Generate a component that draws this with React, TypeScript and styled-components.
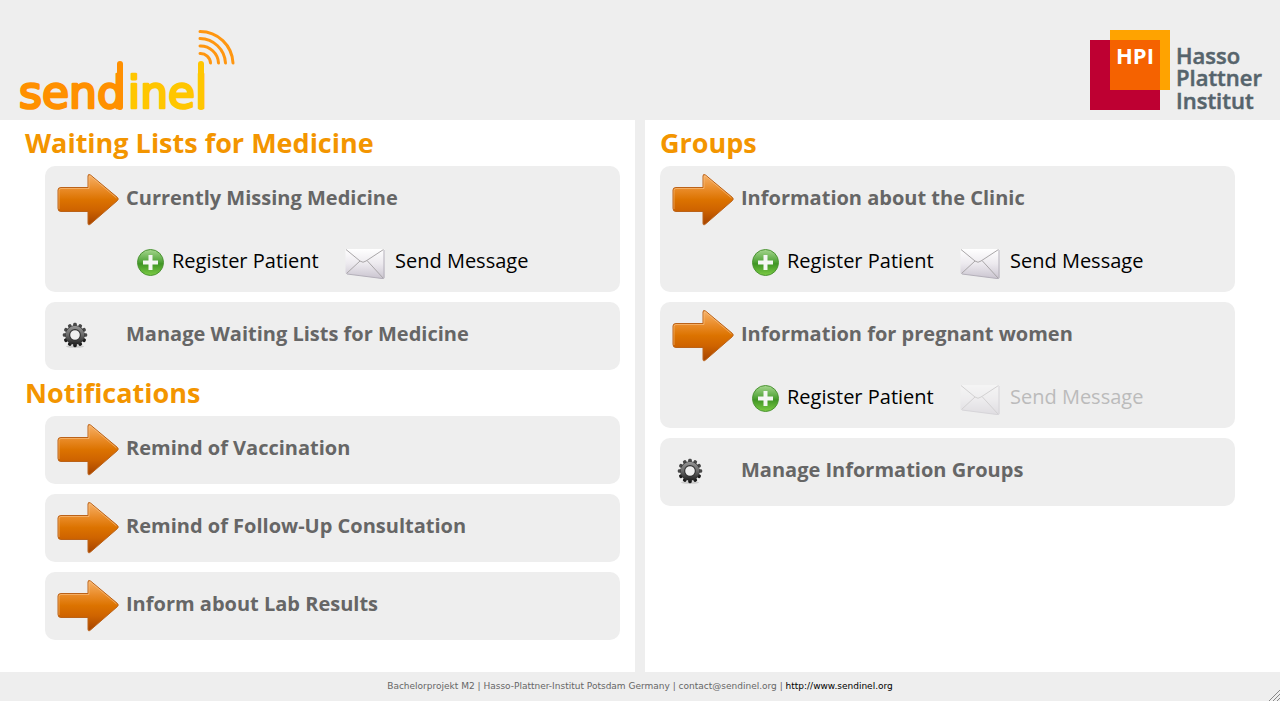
import React, { useId } from "react";
import styled, { createGlobalStyle } from "styled-components";

const GlobalStyle = createGlobalStyle`
  *, *::before, *::after { box-sizing: border-box; }
  body {
    margin: 0;
    background: #fff;
    color: #666;
    font-family: "Open Sans", "Noto Sans", sans-serif;
  }
  a { color: inherit; text-decoration: none; }
`;

const Page = styled.div`
  display: flex;
  flex-direction: column;
  min-height: 100vh;
`;

const Header = styled.header`
  display: flex;
  justify-content: space-between;
  align-items: flex-end;
  height: 120px;
  padding: 0 16px;
  background: #eee;
`;

const LogoLink = styled.a`
  display: block;
  svg { display: block; }
`;

const Main = styled.main`
  flex: 1;
  display: grid;
  grid-template-columns: 1fr 1fr;
  gap: 10px;
  background: #eee;
`;

const Column = styled.div<{ $side: "left" | "right" }>`
  background: #fff;
  padding: ${(p) => (p.$side === "left" ? "0 15px 22px 45px" : "0 45px 22px 15px")};
`;

const SectionTitle = styled.h2<{ $outdent?: boolean }>`
  margin: 0 0 0 ${(p) => (p.$outdent ? "-20px" : "0")};
  font-size: 27px;
  line-height: 46px;
  font-weight: 700;
  color: #f39500;
`;

const CardList = styled.ul`
  list-style: none;
  margin: 0;
  padding: 0;
  display: flex;
  flex-direction: column;
  gap: 10px;
`;

const Card = styled.li`
  background: #eee;
  border-radius: 10px;
`;

const CardLink = styled.a`
  display: grid;
  grid-template-columns: 62px 1fr;
  align-items: center;
  column-gap: 7px;
  height: 68px;
  padding: 0 12px 4px;
  font-size: 20px;
  line-height: 28px;
  font-weight: 700;
`;

const IconSlot = styled.span<{ $kind: "arrow" | "gear" }>`
  padding: ${(p) => (p.$kind === "arrow" ? "3px 0 0" : "2px 0 0 5px")};
  svg { display: block; }
`;

const Actions = styled.div`
  display: grid;
  grid-template-columns: 208px auto;
  justify-content: start;
  height: 58px;
  padding: 11px 12px 0 92px;
`;

const Action = styled.a<{ $wide?: boolean; $disabled?: boolean }>`
  display: grid;
  grid-template-columns: ${(p) => (p.$wide ? "40px" : "27px")} auto;
  column-gap: ${(p) => (p.$wide ? "10px" : "8px")};
  justify-content: start;
  align-items: start;
  font-size: 20px;
  line-height: 32px;
  color: ${(p) => (p.$disabled ? "#bbb" : "#000")};
  pointer-events: ${(p) => (p.$disabled ? "none" : "auto")};
  svg {
    display: block;
    margin-top: 4px;
    opacity: ${(p) => (p.$disabled ? 0.4 : 1)};
  }
`;

const Footer = styled.footer`
  position: relative;
  height: 29px;
  background: #eee;
  text-align: center;
  font-family: "DejaVu Sans", sans-serif;
  font-size: 9px;
  line-height: 28px;
`;

const FooterLink = styled.a`
  color: #000;
`;

const Grip = styled.svg`
  position: absolute;
  right: 0;
  bottom: 0;
`;

function SendinelLogo() {
  return (
    <svg width="222" height="92" viewBox="0 0 222 92" role="img" aria-label="sendinel">
      <g fontFamily="'DejaVu Sans', sans-serif" fontSize="44" strokeWidth="2.600" strokeLinejoin="round">
        <text x="3" y="80" fill="#ff9000" stroke="#ff9000">send</text>
        <text x="112" y="80" fill="#ffc600" stroke="#ffc600">inel</text>
      </g>
      <path d="M104 36V79" stroke="#ff9000" strokeWidth="6" strokeLinecap="round" />
      <path d="M185 36V79" stroke="#ffc600" strokeWidth="6" strokeLinecap="round" />
      <g fill="none" stroke="#ff9610" strokeWidth="3" strokeLinecap="round">
        <path d="M184 25.500a10 10 0 0 1 10.500 9.500" />
        <path d="M184 18a18 18 0 0 1 18.500 17" />
        <path d="M184 10.500a26 26 0 0 1 25.500 24.500" />
        <path d="M184 3.500a33 33 0 0 1 33 31.500" />
      </g>
    </svg>
  );
}

function HpiLogo() {
  return (
    <svg width="174" height="92" viewBox="0 0 174 92" role="img" aria-label="Hasso Plattner Institut">
      <path fill="#be0032" d="M0 12h70v70H0z" />
      <path fill="#ffa300" d="M20 2h60v60H20z" />
      <path fill="#f56200" d="M20 12h50v50H20z" />
      <g fontFamily="'Open Sans', sans-serif" fontSize="22" fontWeight="600">
        <text x="26" y="36" fill="#fff" fontWeight="700">HPI</text>
        <g fill="#56646c" stroke="#56646c" strokeWidth="0.500">
          <text x="86" y="36">Hasso</text>
          <text x="86" y="58">Plattner</text>
          <text x="86" y="81">Institut</text>
        </g>
      </g>
    </svg>
  );
}

function ArrowIcon() {
  const id = useId();
  return (
    <svg width="62" height="54" viewBox="0 0 62 54" aria-hidden="true">
      <defs>
        <linearGradient id={id} x1="0" y1="0" x2="0" y2="1">
          <stop offset="0" stopColor="#f7b26a" />
          <stop offset="0.300" stopColor="#e98a26" />
          <stop offset="0.500" stopColor="#dc7300" />
          <stop offset="0.700" stopColor="#cf6400" />
          <stop offset="1" stopColor="#a54300" />
        </linearGradient>
      </defs>
      <path
        d="M4 14.500H31V3Q31 .500 33.500 2L60.500 24.500Q62 26 60.500 27.500L33.500 51Q31 53 31 50V38.500H4Q1 38.500 1 35.500V17Q1 14.500 4 14.500Z"
        fill={`url(#${id})`}
        stroke="#bb6218"
      />
      <path
        d="M2 36V17.500Q2 15.500 4 15.500H32V4Q32 2 34 3.500L59.500 25"
        fill="none"
        stroke="#fbc890"
        strokeOpacity="0.550"
      />
    </svg>
  );
}

const teeth = Array.from({ length: 12 }, (_, i) => i * 30);

function GearIcon() {
  const id = useId();
  return (
    <svg width="26" height="26" viewBox="0 0 26 26" aria-hidden="true">
      <defs>
        <linearGradient id={id} gradientUnits="userSpaceOnUse" x1="0" y1="3" x2="0" y2="23">
          <stop offset="0" stopColor="#9a9a9a" />
          <stop offset="0.500" stopColor="#6a6a6a" />
          <stop offset="1" stopColor="#1c1c1c" />
        </linearGradient>
      </defs>
      <ellipse cx="13" cy="24.500" rx="9" ry="1.300" fill="#ccc" />
      {teeth.map((a) => (
        <rect key={a} x="11.200" y="0.800" width="3.600" height="5" rx="1.400" fill={a > 90 && a < 270 ? "#1c1c1c" : "#484848"} transform={`rotate(${a} 13 13)`} />
      ))}
      <circle cx="13" cy="13" r="7.300" fill="none" stroke="#333" strokeWidth="5" />
      <circle cx="13" cy="13" r="7.600" fill="none" stroke={`url(#${id})`} strokeWidth="3.400" />
    </svg>
  );
}

function PlusIcon() {
  const id = useId();
  return (
    <svg width="27" height="27" viewBox="0 0 27 27" aria-hidden="true">
      <defs>
        <linearGradient id={id} x1="0" y1="0" x2="0" y2="1">
          <stop offset="0" stopColor="#a5d68e" />
          <stop offset="0.450" stopColor="#55a63c" />
          <stop offset="0.550" stopColor="#3f9524" />
          <stop offset="1" stopColor="#7ccb45" />
        </linearGradient>
      </defs>
      <circle cx="13.500" cy="13.500" r="13" fill={`url(#${id})`} stroke="#4c9434" />
      <path d="M13.500 6v15M6 13.500h15" stroke="#f4f6f3" strokeWidth="4" />
    </svg>
  );
}

function MailIcon() {
  const id = useId();
  return (
    <svg width="40" height="32" viewBox="0 0 40 32" aria-hidden="true">
      <defs>
        <linearGradient id={id} x1="0" y1="0" x2="0" y2="1">
          <stop offset="0" stopColor="#fff" />
          <stop offset="0.500" stopColor="#ece9ee" />
          <stop offset="1" stopColor="#c9c4cf" />
        </linearGradient>
      </defs>
      <path d="M1 0H38.500Q39.500 0 39.500 1V28.500Q39.500 30 38 29.800L2 25Q.500 24.800 .500 23.500V1Z" fill={`url(#${id})`} />
      <path d="M39 1V28.500Q39 30 37 29.500L2 25" fill="none" stroke="#b4b0ba" />
      <path d="M1 .500L15 12Q18 14.500 21 12L38.500 .500M1.500 24.500L15 12M38 29L22 11.500" fill="none" stroke="#a9a6a8" />
    </svg>
  );
}

type Entry = { title: string; kind?: "arrow" | "gear"; actions?: boolean; sendDisabled?: boolean };

function EntryCard({ title, kind = "arrow", actions, sendDisabled }: Entry) {
  return (
    <Card>
      <CardLink href="#">
        <IconSlot $kind={kind}>{kind === "arrow" ? <ArrowIcon /> : <GearIcon />}</IconSlot>
        <span>{title}</span>
      </CardLink>
      {actions && (
        <Actions>
          <Action href="#"><PlusIcon />Register Patient</Action>
          <Action href="#" $wide $disabled={sendDisabled} aria-disabled={sendDisabled}>
            <MailIcon />Send Message
          </Action>
        </Actions>
      )}
    </Card>
  );
}

function EntrySection({ title, entries, outdent }: { title: string; entries: Entry[]; outdent?: boolean }) {
  return (
    <section>
      <SectionTitle $outdent={outdent}>{title}</SectionTitle>
      <CardList>
        {entries.map((e) => <EntryCard key={e.title} {...e} />)}
      </CardList>
    </section>
  );
}

export default function App() {
  return (
    <Page>
      <GlobalStyle />
      <Header>
        <LogoLink href="#"><SendinelLogo /></LogoLink>
        <LogoLink href="#"><HpiLogo /></LogoLink>
      </Header>
      <Main>
        <Column $side="left">
          <EntrySection
            outdent
            title="Waiting Lists for Medicine"
            entries={[
              { title: "Currently Missing Medicine", actions: true },
              { title: "Manage Waiting Lists for Medicine", kind: "gear" },
            ]}
          />
          <EntrySection
            outdent
            title="Notifications"
            entries={[
              { title: "Remind of Vaccination" },
              { title: "Remind of Follow-Up Consultation" },
              { title: "Inform about Lab Results" },
            ]}
          />
        </Column>
        <Column $side="right">
          <EntrySection
            title="Groups"
            entries={[
              { title: "Information about the Clinic", actions: true },
              { title: "Information for pregnant women", actions: true, sendDisabled: true },
              { title: "Manage Information Groups", kind: "gear" },
            ]}
          />
        </Column>
      </Main>
      <Footer>
        Bachelorprojekt M2 | Hasso-Plattner-Institut Potsdam Germany | contact@sendinel.org |{" "}
        <FooterLink href="#">http://www.sendinel.org</FooterLink>
        <Grip width="12" height="12" viewBox="0 0 12 12" aria-hidden="true">
          <path d="M1 12L12 1M5 12L12 5M9 12L12 9" stroke="#888" />
        </Grip>
      </Footer>
    </Page>
  );
}
